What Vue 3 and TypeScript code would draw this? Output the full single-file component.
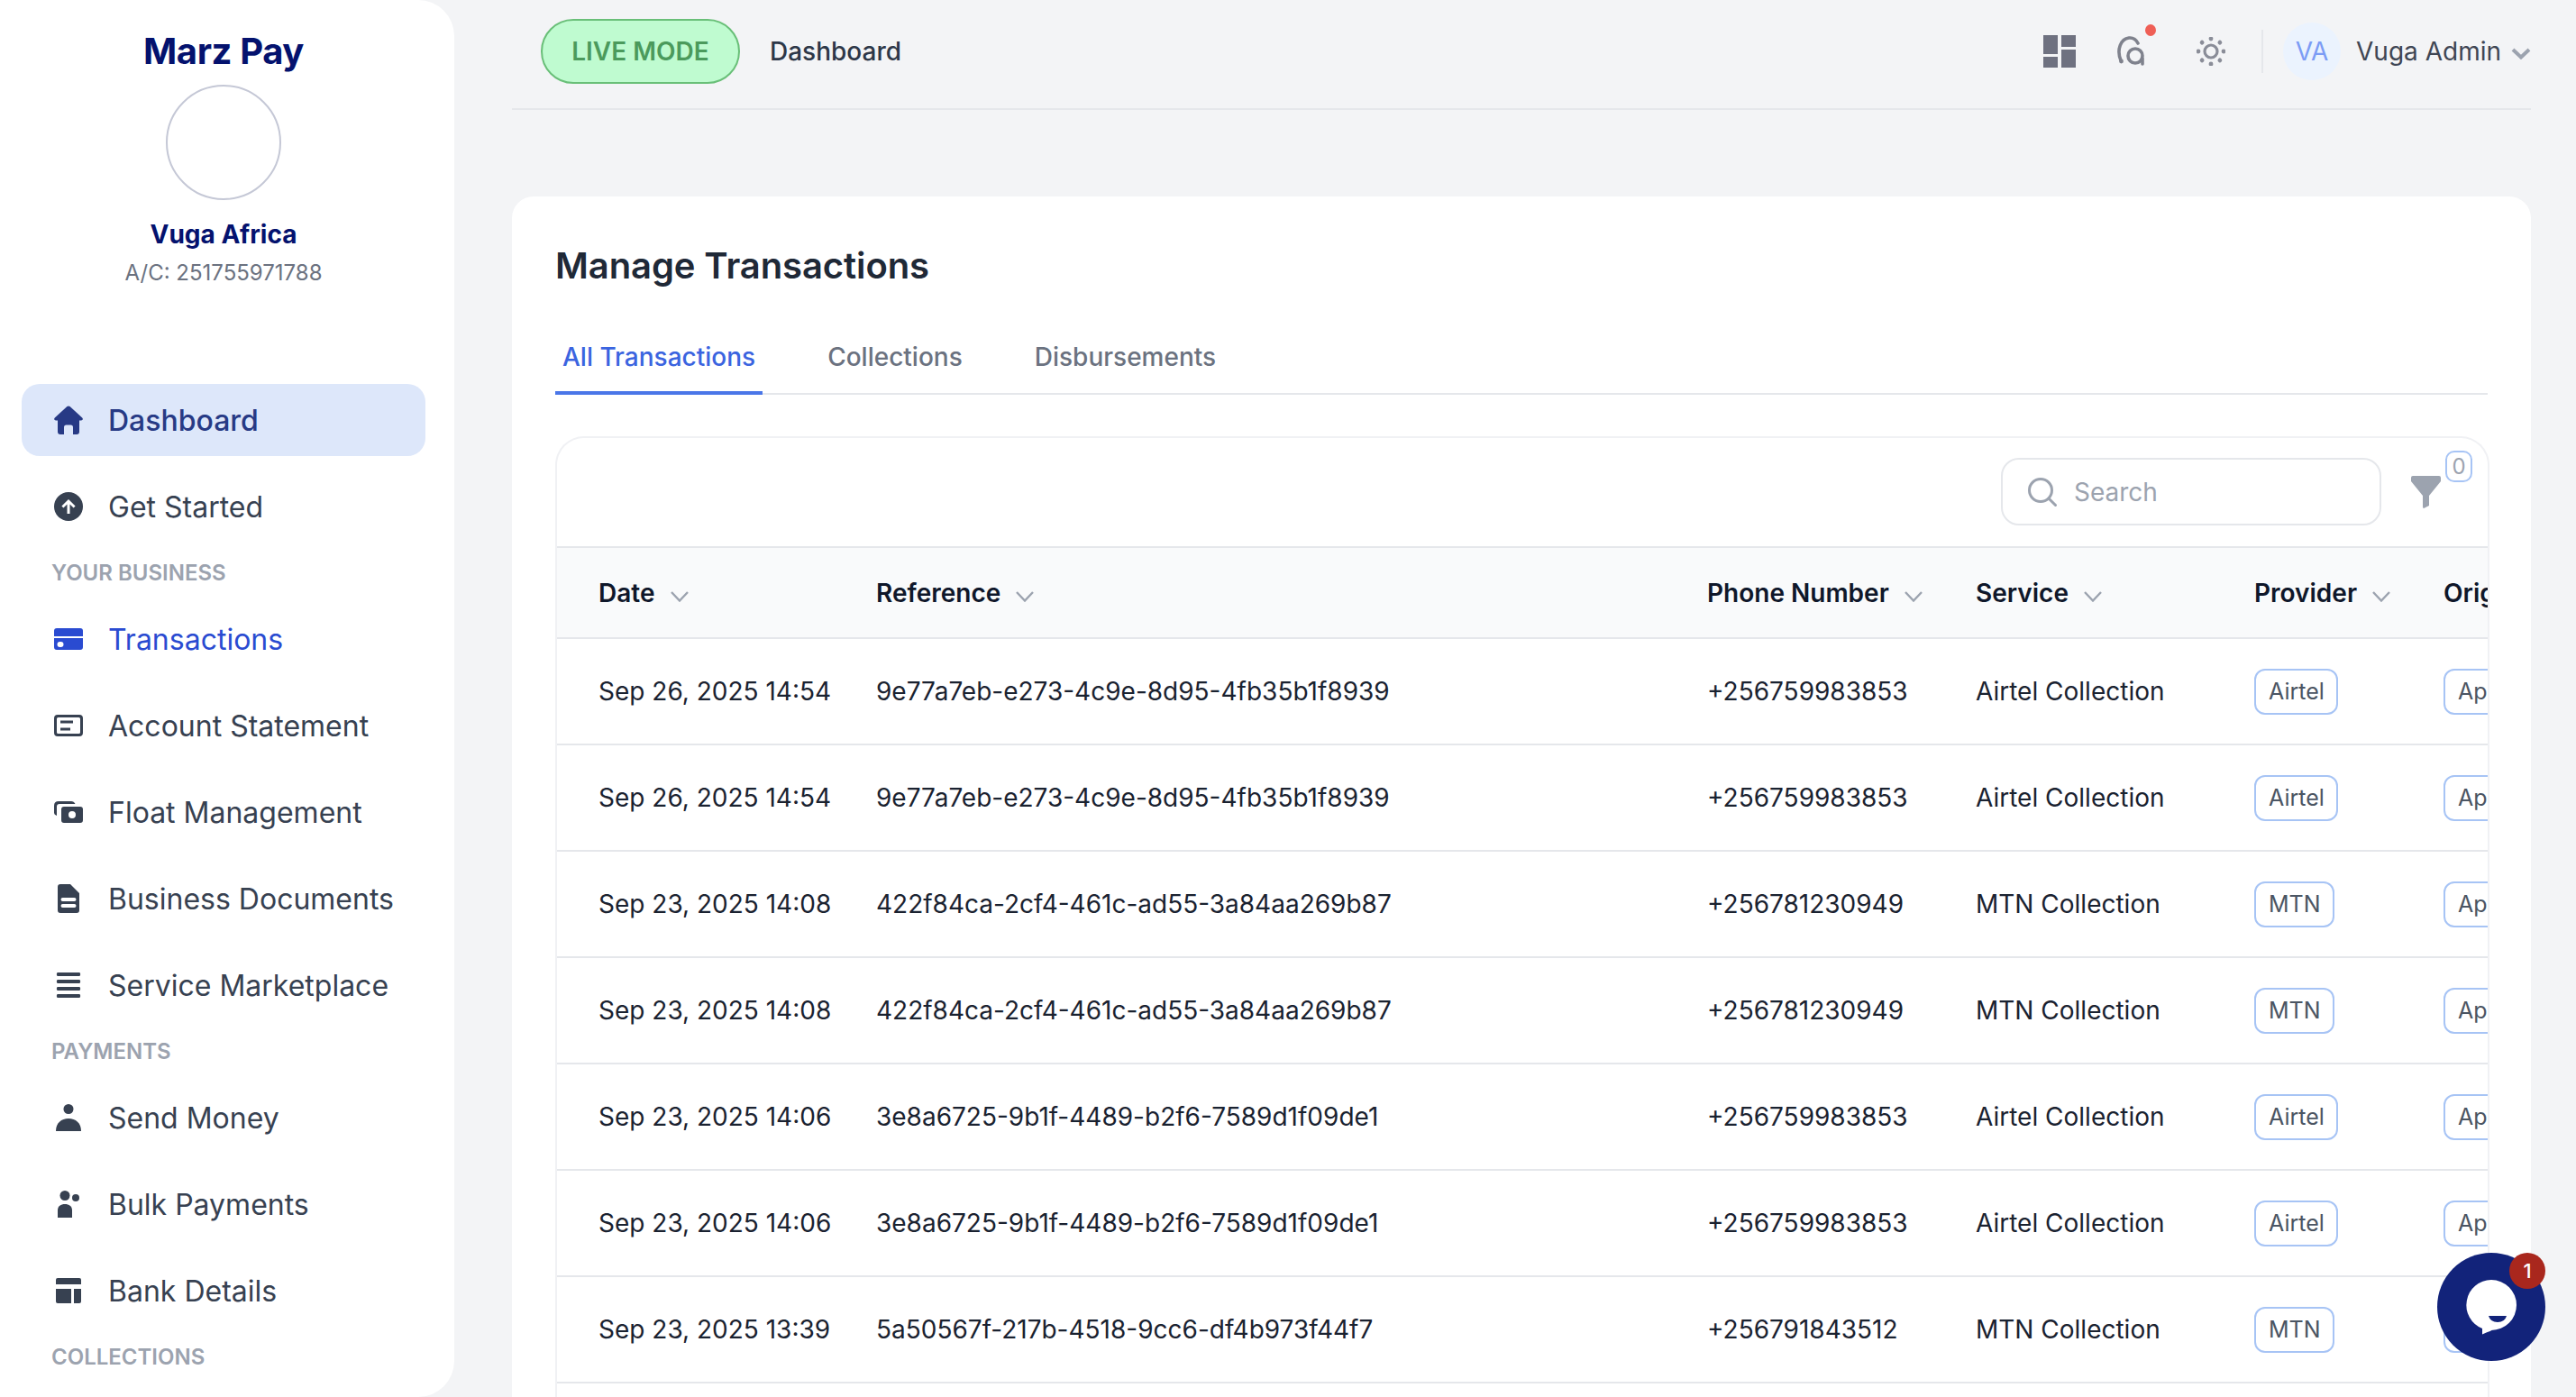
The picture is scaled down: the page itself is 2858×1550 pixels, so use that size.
<script setup lang="ts">
interface IconPart {
  d: string;
  color?: string;
}

interface Icon {
  w: number;
  h: number;
  parts: IconPart[];
}

interface NavEntry {
  label: string;
  icon?: string;
  active?: boolean;
  current?: boolean;
}

interface TxRow {
  date: string;
  reference: string;
  phone: string;
  service: string;
  provider: string;
}

const icons: Record<string, Icon> = {
  home: {
    w: 32,
    h: 32,
    parts: [
      {
        d: "M14.4 1 Q16 -.2 17.6 1 L31.2 13.4 Q33 15.8 30 16.4 H28 V29 Q28 32 25 32 H21 V24 Q21 21.5 18.5 21.5 H13.5 Q11 21.5 11 24 V32 H7 Q4 32 4 29 V16.4 H2 Q-1 15.8 .8 13.4 Z",
      },
    ],
  },
  upload: {
    w: 32,
    h: 32,
    parts: [
      { d: "M16 0 A16 16 0 1 1 16 32 A16 16 0 1 1 16 0 Z" },
      {
        d: "M16 8 L23.6 15.4 L21.6 17.4 L17.5 13.6 V24 H14.5 V13.6 L10.4 17.4 L8.4 15.4 Z",
        color: "#fff",
      },
    ],
  },
  card: {
    w: 32,
    h: 24,
    parts: [
      { d: "M3 0 H29 Q32 0 32 3 V9 H0 V3 Q0 0 3 0 Z" },
      {
        d: "M0 11 H32 V21 Q32 24 29 24 H3 Q0 24 0 21 Z M6.5 15 A3 3 0 1 0 6.5 21 H7.5 A3 3 0 1 0 7.5 15 Z",
      },
    ],
  },
  statement: {
    w: 32,
    h: 24,
    parts: [
      {
        d: "M4 0 H28 Q32 0 32 4 V20 Q32 24 28 24 H4 Q0 24 0 20 V4 Q0 0 4 0 Z M4.5 3 Q3 3 3 4.5 V19.5 Q3 21 4.5 21 H27.5 Q29 21 29 19.5 V4.5 Q29 3 27.5 3 Z",
      },
      { d: "M7 6.5 H21 V9.5 H7 Z M7 14.5 H18 V17.5 H7 Z" },
    ],
  },
  float: {
    w: 32,
    h: 24,
    parts: [
      {
        d: "M5 0 H19 Q22 0 23.5 3 H6 Q3 3 3 6 V16 H3 Q0 15 0 13 V5 Q0 0 5 0 Z",
      },
      {
        d: "M11 6 H29 Q32 6 32 9 V21 Q32 24 29 24 H11 Q8 24 8 21 V9 Q8 6 11 6 Z M20 11 A4 4 0 1 0 20 19 A4 4 0 1 0 20 11 Z",
      },
    ],
  },
  doc: {
    w: 24,
    h: 32,
    parts: [
      {
        d: "M3 0 H14 L24 10 V29 Q24 32 21 32 H3 Q0 32 0 29 V3 Q0 0 3 0 Z M5.5 15 A2 2 0 0 0 5.5 19 H18.5 A2 2 0 0 0 18.5 15 Z M5.5 22 A2 2 0 0 0 5.5 26 H18.5 A2 2 0 0 0 18.5 22 Z",
      },
    ],
  },
  menu: {
    w: 28,
    h: 28,
    parts: [
      {
        d: "M1.5 0 H26.5 Q28 2 26.5 4 H1.5 Q0 2 1.5 0 Z M1.5 8 H26.5 Q28 10 26.5 12 H1.5 Q0 10 1.5 8 Z M1.5 16 H26.5 Q28 18 26.5 20 H1.5 Q0 18 1.5 16 Z M1.5 24 H26.5 Q28 26 26.5 28 H1.5 Q0 26 1.5 24 Z",
      },
    ],
  },
  person: {
    w: 28,
    h: 30,
    parts: [
      { d: "M14 0 A5.5 5.5 0 1 1 14 11 A5.5 5.5 0 1 1 14 0 Z" },
      { d: "M0 30 C0 21 6 16 14 16 C22 16 28 21 28 30 Z" },
    ],
  },
  people: {
    w: 24,
    h: 30,
    parts: [
      { d: "M8 0 A5.5 5.5 0 1 1 8 11 A5.5 5.5 0 1 1 8 0 Z" },
      { d: "M20 4 A4 4 0 1 1 20 12 A4 4 0 1 1 20 4 Z" },
      { d: "M0 30 V22 C0 17 3.5 15 8 15 C12.5 15 16 17 16 22 V30 Z" },
    ],
  },
  bank: {
    w: 28,
    h: 28,
    parts: [
      { d: "M2 0 H26 Q28 0 28 2 V7 H0 V2 Q0 0 2 0 Z" },
      { d: "M0 12 H17 V28 H2 Q0 28 0 26 Z" },
      { d: "M20 12 H28 V26 Q28 28 26 28 H20 Z" },
    ],
  },
};

const nav: NavEntry[] = [
  { label: "Dashboard", icon: "home", active: true },
  { label: "Get Started", icon: "upload" },
  { label: "YOUR BUSINESS" },
  { label: "Transactions", icon: "card", current: true },
  { label: "Account Statement", icon: "statement" },
  { label: "Float Management", icon: "float" },
  { label: "Business Documents", icon: "doc" },
  { label: "Service Marketplace", icon: "menu" },
  { label: "PAYMENTS" },
  { label: "Send Money", icon: "person" },
  { label: "Bulk Payments", icon: "people" },
  { label: "Bank Details", icon: "bank" },
  { label: "COLLECTIONS" },
];

const tabs = ["All Transactions", "Collections", "Disbursements"];

const columns = ["Date", "Reference", "Phone Number", "Service", "Provider", "Origin"];

const rows: TxRow[] = [
  {
    date: "Sep 26, 2025 14:54",
    reference: "9e77a7eb-e273-4c9e-8d95-4fb35b1f8939",
    phone: "+256759983853",
    service: "Airtel Collection",
    provider: "Airtel",
  },
  {
    date: "Sep 26, 2025 14:54",
    reference: "9e77a7eb-e273-4c9e-8d95-4fb35b1f8939",
    phone: "+256759983853",
    service: "Airtel Collection",
    provider: "Airtel",
  },
  {
    date: "Sep 23, 2025 14:08",
    reference: "422f84ca-2cf4-461c-ad55-3a84aa269b87",
    phone: "+256781230949",
    service: "MTN Collection",
    provider: "MTN",
  },
  {
    date: "Sep 23, 2025 14:08",
    reference: "422f84ca-2cf4-461c-ad55-3a84aa269b87",
    phone: "+256781230949",
    service: "MTN Collection",
    provider: "MTN",
  },
  {
    date: "Sep 23, 2025 14:06",
    reference: "3e8a6725-9b1f-4489-b2f6-7589d1f09de1",
    phone: "+256759983853",
    service: "Airtel Collection",
    provider: "Airtel",
  },
  {
    date: "Sep 23, 2025 14:06",
    reference: "3e8a6725-9b1f-4489-b2f6-7589d1f09de1",
    phone: "+256759983853",
    service: "Airtel Collection",
    provider: "Airtel",
  },
  {
    date: "Sep 23, 2025 13:39",
    reference: "5a50567f-217b-4518-9cc6-df4b973f44f7",
    phone: "+256791843512",
    service: "MTN Collection",
    provider: "MTN",
  },
];

const sunRays = [0, 45, 90, 135, 180, 225, 270, 315];
</script>

<template>
  <div class="shell">
    <aside class="sidebar">
      <div class="brand">Marz Pay</div>
      <div class="avatar"></div>
      <div class="org">Vuga Africa</div>
      <div class="account">A/C: 251755971788</div>

      <nav class="nav">
        <template v-for="entry in nav" :key="entry.label">
          <div v-if="entry.icon" class="nav-item" :class="{ active: entry.active, current: entry.current }">
            <span class="nav-icon">
              <svg
                :width="icons[entry.icon].w"
                :height="icons[entry.icon].h"
                :viewBox="`0 0 ${icons[entry.icon].w} ${icons[entry.icon].h}`"
              >
                <path
                  v-for="part in icons[entry.icon].parts"
                  :key="part.d"
                  :d="part.d"
                  :fill="part.color || 'currentColor'"
                  fill-rule="evenodd"
                />
              </svg>
            </span>
            <span>{{ entry.label }}</span>
          </div>
          <div v-else class="nav-label">{{ entry.label }}</div>
        </template>
      </nav>
    </aside>

    <main class="main">
      <header class="topbar">
        <span class="live-pill">LIVE MODE</span>
        <span class="crumb">Dashboard</span>

        <div class="top-actions">
          <svg class="top-icon" width="36" height="36" viewBox="0 0 36 36" fill="#6e7180">
            <rect x="0" y="0" width="16" height="21" />
            <rect x="0" y="24" width="16" height="12" />
            <rect x="20" y="0" width="16" height="13" />
            <rect x="20" y="16" width="16" height="20" />
          </svg>

          <span class="notify">
            <svg width="34" height="34" viewBox="0 0 34 34" fill="none" stroke="#7f828d" stroke-width="3.6" stroke-linecap="round">
              <path d="M4 27 C-1 15 4 3 13 2 C18 1.5 21 4 23 8" />
              <circle cx="4.5" cy="28" r="2.4" fill="#7f828d" stroke="none" />
              <circle cx="20" cy="22" r="8" />
              <path d="M28 25 V31" />
            </svg>
            <i class="notify-dot"></i>
          </span>

          <svg class="sun" width="32" height="32" viewBox="-16 -16 32 32" fill="#8a8d98">
            <circle cx="0" cy="0" r="7" fill="none" stroke="#8a8d98" stroke-width="3.2" />
            <circle v-for="deg in sunRays" :key="deg" cx="0" cy="-14" r="2.4" :transform="`rotate(${deg})`" />
          </svg>

          <span class="top-divider"></span>
          <span class="user-avatar">VA</span>
          <span class="user-name">Vuga Admin</span>
          <svg class="user-chevron" width="22" height="13" viewBox="0 0 22 13" fill="none" stroke="#9ca3af" stroke-width="4">
            <path d="M2 2 L11 10.5 L20 2" />
          </svg>
        </div>
      </header>

      <section class="card">
        <h1 class="title">Manage Transactions</h1>

        <div class="tabs">
          <span v-for="(tab, i) in tabs" :key="tab" class="tab" :class="{ 'tab-active': i === 0 }">{{ tab }}</span>
        </div>

        <div class="table-box">
          <div class="toolbar">
            <div class="search">
              <svg width="32" height="32" viewBox="0 0 32 32" fill="none" stroke="#9ca3af" stroke-width="3" stroke-linecap="round">
                <circle cx="14" cy="14" r="12.5" />
                <path d="M23.5 23.5 L30.5 30.5" />
              </svg>
              <span>Search</span>
            </div>
            <div class="filter">
              <svg width="33" height="36" viewBox="0 0 33 36" fill="#9ca3af">
                <path d="M2 0 H31 Q33 0 33 2 V6 L20 22 V33 L14 36 Q13 36 13 34 V22 L0 6 V2 Q0 0 2 0 Z" />
              </svg>
              <span class="filter-count">0</span>
            </div>
          </div>

          <table class="tx-table">
            <colgroup>
              <col class="col-date" />
              <col class="col-ref" />
              <col class="col-phone" />
              <col class="col-service" />
              <col class="col-provider" />
              <col class="col-origin" />
            </colgroup>
            <thead>
              <tr>
                <th v-for="col in columns" :key="col">
                  {{ col }}
                  <svg class="sort" width="20" height="12" viewBox="0 0 20 12" fill="none" stroke="#9ca3af" stroke-width="2.4">
                    <path d="M1 1 L10 10.5 L19 1" />
                  </svg>
                </th>
              </tr>
            </thead>
            <tbody>
              <tr v-for="(row, i) in rows" :key="i">
                <td>{{ row.date }}</td>
                <td>{{ row.reference }}</td>
                <td>{{ row.phone }}</td>
                <td>{{ row.service }}</td>
                <td><span class="tag">{{ row.provider }}</span></td>
                <td><span class="tag">App</span></td>
              </tr>
            </tbody>
          </table>
        </div>
      </section>
    </main>

    <div class="chat">
      <svg width="120" height="120" viewBox="0 0 120 120">
        <circle cx="60" cy="60" r="60" fill="#12237a" />
        <path d="M60 30 A28 28 0 0 1 60 86 Q64 85 50 90.5 L50 84 A28 28 0 0 1 60 30 Z" fill="#fff" />
        <path d="M57 70 H77 Q75 77 67 77 Q59 77 57 70 Z" fill="#12237a" />
      </svg>
      <span class="chat-badge">1</span>
    </div>
  </div>
</template>

<style>
html,
body {
  margin: 0;
  background: #f3f4f6;
}
</style>

<style scoped>
.shell {
  display: flex;
  height: 100vh;
  overflow: hidden;
  background: #f3f4f6;
  font-family: Inter, "Liberation Sans", sans-serif;
  color: #111827;
}

.sidebar {
  flex: 0 0 504px;
  box-sizing: border-box;
  height: 100%;
  padding: 33px 32px 0 24px;
  overflow: hidden;
  background: #fff;
  border-radius: 0 40px 40px 0;
  display: flex;
  flex-direction: column;
  align-items: center;
}

.brand {
  font-size: 40px;
  line-height: 48px;
  font-weight: 700;
  letter-spacing: -0.4px;
  color: #04126e;
}

.avatar {
  width: 128px;
  height: 128px;
  box-sizing: border-box;
  margin-top: 13px;
  border: 2px solid #c5c8d6;
  border-radius: 50%;
  flex-shrink: 0;
}

.org {
  margin-top: 20px;
  font-size: 28px;
  line-height: 36px;
  font-weight: 700;
  color: #04126e;
}

.account {
  margin-top: 7px;
  font-size: 24px;
  line-height: 36px;
  color: #6b7280;
}

.nav {
  width: 100%;
  margin-top: 105px;
  display: flex;
  flex-direction: column;
  flex-shrink: 0;
}

.nav-item {
  height: 80px;
  margin-bottom: 16px;
  padding-left: 36px;
  display: flex;
  align-items: center;
  gap: 28px;
  flex-shrink: 0;
  border-radius: 20px;
  font-size: 32px;
  color: #374151;
}

.nav-item.active {
  background: #dde7fa;
  color: #273a85;
  font-weight: 500;
}

.nav-item.current {
  color: #2a4bd1;
}

.nav-icon {
  width: 32px;
  display: flex;
  justify-content: center;
}

.nav-label {
  height: 68px;
  margin-top: -17px;
  padding-left: 33px;
  display: flex;
  align-items: center;
  flex-shrink: 0;
  font-size: 24px;
  font-weight: 600;
  color: #9ca3af;
}

.main {
  flex: 1;
  min-width: 0;
  padding: 0 50px 0 64px;
}

.topbar {
  height: 114px;
  padding-left: 32px;
  padding-bottom: 6px;
  display: flex;
  align-items: center;
  border-bottom: 2px solid #e5e7eb;
}

.live-pill {
  box-sizing: border-box;
  width: 221px;
  height: 72px;
  display: flex;
  align-items: center;
  justify-content: center;
  border: 2px solid #69bf78;
  border-radius: 36px;
  background: #bffbd0;
  color: #4b9a5c;
  font-size: 28px;
  font-weight: 600;
}

.crumb {
  margin-left: 33px;
  font-size: 28px;
  font-weight: 500;
  color: #2d3748;
}

.top-actions {
  margin-left: auto;
  display: flex;
  align-items: center;
}

.top-icon {
  margin-right: 46px;
}

.notify {
  position: relative;
  width: 34px;
  height: 34px;
  margin-right: 54px;
}

.notify-dot {
  position: absolute;
  top: -13px;
  right: -9px;
  width: 12px;
  height: 13px;
  border-radius: 50%;
  background: #ef5f56;
}

.sun {
  margin-right: 40px;
}

.top-divider {
  width: 2px;
  height: 48px;
  margin-right: 22px;
  background: #e5e7eb;
}

.user-avatar {
  width: 64px;
  height: 64px;
  display: flex;
  align-items: center;
  justify-content: center;
  border-radius: 50%;
  background: #ebf3fe;
  color: #7c9cf5;
  font-size: 28px;
}

.user-name {
  margin-left: 17px;
  font-size: 28px;
  color: #3f4654;
}

.user-chevron {
  margin-left: 11px;
  margin-top: 4px;
}

.card {
  margin-top: 96px;
  padding: 46px 48px 0 48px;
  background: #fff;
  border-radius: 24px;
  min-height: 1400px;
}

.title {
  margin: 0;
  font-size: 40px;
  line-height: 62px;
  font-weight: 600;
  letter-spacing: -0.1px;
  color: #1f2937;
}

.tabs {
  margin-top: 38px;
  display: flex;
  gap: 64px;
  border-bottom: 2px solid #e5e7eb;
}

.tab {
  padding: 14px 8px 0;
  height: 74px;
  box-sizing: border-box;
  margin-bottom: -2px;
  font-size: 28px;
  line-height: 36px;
  color: #6b7280;
  font-weight: 500;
}

.tab-active {
  color: #3b64e0;
  border-bottom: 4px solid #4a76e8;
}

.table-box {
  margin-top: 46px;
  margin-right: -2px;
  border: 2px solid #f0f1f4;
  border-bottom: 0;
  border-radius: 32px 32px 0 0;
  overflow: hidden;
  min-height: 1200px;
}

.toolbar {
  height: 120px;
  box-sizing: border-box;
  padding: 22px 0 0 0;
  display: flex;
  justify-content: flex-end;
}

.search {
  box-sizing: border-box;
  width: 422px;
  height: 75px;
  padding-left: 28px;
  display: flex;
  align-items: center;
  gap: 19px;
  border: 2px solid #e5e7eb;
  border-radius: 20px;
  color: #9ca3af;
  font-size: 28px;
}

.filter {
  position: relative;
  width: 118px;
  padding: 20px 0 0 33px;
  box-sizing: border-box;
}

.filter-count {
  position: absolute;
  top: -8px;
  left: 71px;
  box-sizing: border-box;
  width: 30px;
  height: 35px;
  display: flex;
  align-items: center;
  justify-content: center;
  border: 2px solid #a7c4f5;
  border-radius: 10px;
  color: #9ca3af;
  font-size: 24px;
}

.tx-table {
  width: 2400px;
  table-layout: fixed;
  border-collapse: collapse;
}

.col-date {
  width: 308px;
}

.col-ref {
  width: 922px;
}

.col-phone {
  width: 298px;
}

.col-service {
  width: 309px;
}

.col-provider {
  width: 210px;
}

.tx-table th {
  height: 99px;
  padding: 0 0 0 46px;
  text-align: left;
  white-space: nowrap;
  background: #f9fafb;
  border-top: 2px solid #e5e7eb;
  border-bottom: 2px solid #e5e7eb;
  font-size: 28px;
  font-weight: 600;
  color: #0f172a;
}

.sort {
  margin-left: 10px;
}

.tx-table td {
  height: 116px;
  padding: 0 0 0 46px;
  white-space: nowrap;
  border-bottom: 2px solid #e5e7eb;
  font-size: 28px;
  color: #1a2230;
}

.tag {
  display: inline-block;
  box-sizing: border-box;
  height: 51px;
  padding: 0 13px 0 14px;
  line-height: 47px;
  vertical-align: middle;
  border: 2px solid #a7c4f5;
  border-radius: 12px;
  font-size: 25px;
  color: #4b5563;
}

.chat {
  position: fixed;
  left: 2704px;
  top: 1390px;
  width: 120px;
  height: 120px;
}

.chat svg {
  display: block;
}

.chat-badge {
  position: absolute;
  top: 0;
  right: 0;
  width: 40px;
  height: 40px;
  display: flex;
  align-items: center;
  justify-content: center;
  border-radius: 50%;
  background: #a9271d;
  color: #fff;
  font-size: 22px;
  font-weight: 500;
}
</style>
